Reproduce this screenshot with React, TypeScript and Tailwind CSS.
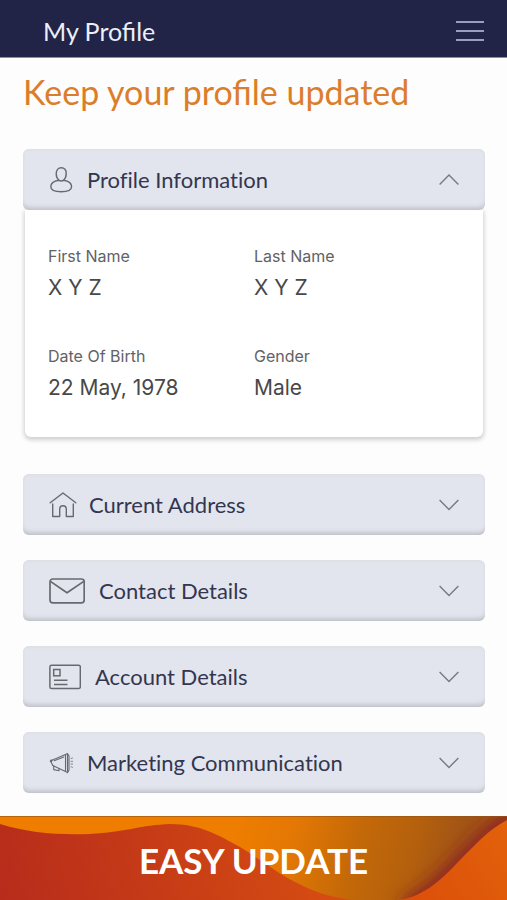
import React, { useState } from 'react';

interface Field {
  label: string;
  value: string;
}

interface Section {
  id: string;
  title: string;
  icon: React.ReactNode;
  gap: string;
  fields: Field[];
}

const UserIcon = () => (
  <svg className="w-6 h-7" viewBox="0 0 24 28" fill="none" stroke="currentColor" strokeWidth={1.4}>
    <path d="M9.8 14.2C8 12.8 7.2 10.4 7.2 7.6 7.2 4 9.2 1.8 12.2 1.8S17.2 4 17.2 7.6c0 2.800-.8 5.200-2.600 6.600" />
    <path d="M9.8 14.2C5 15 1.8 17.4 1.8 20.6 1.8 24 6.4 25.8 12.2 25.8s10.400-1.800 10.400-5.200c0-3.200-3.200-5.600-8-6.400-1.500 1-3.300 1-4.800 0z" />
  </svg>
);

const HomeIcon = () => (
  <svg className="w-7 h-7" viewBox="0 0 28 28" fill="none" stroke="currentColor" strokeWidth={1.4} strokeLinejoin="round" strokeLinecap="round">
    <path d="M1.2 11.8 14 2l12.8 9.8" />
    <path d="M3.7 13v12.500h7v-7.300c0-4.600 6.600-4.600 6.600 0v7.300h7V13" />
  </svg>
);

const MailIcon = () => (
  <svg className="w-9 h-7" viewBox="0 0 36 28" fill="none" stroke="currentColor" strokeWidth={1.7} strokeLinejoin="round">
    <rect x="1" y="2" width="34.2" height="23.8" rx="2.8" />
    <path d="M1.4 4.4 18 15.8 34.8 4.4" />
  </svg>
);

const CardIcon = () => (
  <svg className="w-8 h-7" viewBox="0 0 32 28" fill="none" stroke="currentColor" strokeWidth={1.5}>
    <rect x="0.9" y="2.3" width="30.4" height="23.2" rx="1.6" />
    <rect x="4.7" y="6.5" width="6.3" height="6.3" />
    <path d="M5 17.300h13.500M5 21.600h13.500" />
  </svg>
);

const MegaphoneIcon = () => (
  <svg className="w-6 h-7" viewBox="0 0 24 28" fill="none" stroke="currentColor" strokeWidth={1.1} strokeLinejoin="round" strokeLinecap="round">
    <path d="M3 11.2 16.500 5.600v16.800L3.800 16.4" />
    <path d="M3 11.2C1.2 10.8.8 12.8 2.2 13.3M3.8 16.4 2.2 13.3 3 11.200" />
    <path d="M5.2 11.8 14.8 8M4.7 17v3.600l5.300 1.200v-2.300" />
    <path d="M16.5 5.6 18.500 4.500v19.200l-2-1.300M18.500 4.500 20 7v14l-1.500 2.700" />
    <path d="M18.500 10.500v7" />
    <path d="M22 9.500l1.500-.5M22 12.300h1.600M22 15h1.600M22 17.800l1.500.5" strokeWidth={0.8} />
  </svg>
);

const Chevron = ({ open }: { open: boolean }) => (
  <svg className="w-5 h-3 text-[#777a82]" viewBox="0 0 20 12" fill="none" stroke="currentColor" strokeWidth={1.4}>
    <path d={open ? 'M.6 10.500 10 1l9.400 9.500' : 'M.6 1 10 10.500 19.400 1'} />
  </svg>
);

const sections: Section[] = [
  {
    id: 'profile',
    title: 'Profile Information',
    icon: <UserIcon />,
    gap: 'gap-[14px]',
    fields: [
      { label: 'First Name', value: 'X Y Z' },
      { label: 'Last Name', value: 'X Y Z' },
      { label: 'Date Of Birth', value: '22 May, 1978' },
      { label: 'Gender', value: 'Male' },
    ],
  },
  { id: 'address', title: 'Current Address', icon: <HomeIcon />, gap: 'gap-3', fields: [] },
  { id: 'contact', title: 'Contact Details', icon: <MailIcon />, gap: 'gap-[14px]', fields: [] },
  { id: 'account', title: 'Account Details', icon: <CardIcon />, gap: 'gap-[14px]', fields: [] },
  { id: 'marketing', title: 'Marketing Communication', icon: <MegaphoneIcon />, gap: 'gap-[14px]', fields: [] },
];

const AccordionItem = ({ section, open, onToggle }: { section: Section; open: boolean; onToggle: () => void }) => (
  <section className={open ? 'mb-3' : ''}>
    <h2>
      <button
        type="button"
        aria-expanded={open}
        onClick={onToggle}
        className="flex w-full h-[61px] items-center justify-between rounded-md bg-[#e2e5ed] px-[26px] shadow-[inset_0_-5px_5px_-3px_#b9bbc3,inset_0_2px_3px_-1px_#dcdde2]"
      >
        <span className={`flex items-center text-[#666a70] ${section.gap}`}>
          {section.icon}
          <span className="font-['Lato',sans-serif] text-[22px] leading-7 text-[#343650] [font-variant-ligatures:none]">{section.title}</span>
        </span>
        <Chevron open={open} />
      </button>
    </h2>
    {open && section.fields.length > 0 && (
      <dl className="mx-[2px] grid grid-cols-2 gap-y-[42px] rounded-b-md bg-white px-[23px] pt-9 pb-[33px] shadow-[0_2px_4px_1px_#cfcfd1] font-['Inter',sans-serif]">
        {section.fields.map((field) => (
          <div key={field.label}>
            <dt className="text-[16px] leading-5 text-[#626265]">{field.label}</dt>
            <dd className="mt-[6px] text-[21px] leading-8 text-[#48484a]">{field.value}</dd>
          </div>
        ))}
      </dl>
    )}
  </section>
);

export default function App() {
  const [openId, setOpenId] = useState('profile');

  return (
    <div className="flex min-h-screen flex-col bg-[#fdfdfd] font-['Lato',sans-serif]">
      <header className="flex h-[58px] items-center justify-between border-b border-[#8e8fa5] bg-[#212447] pl-[43px] pr-[23px] pt-1">
        <p className="text-[25px] leading-8 text-[#eceef8]">My Profile</p>
        <button type="button" aria-label="Menu" className="flex flex-col gap-[7px] w-7">
          <span className="h-[2px] w-full bg-[#9c9dbd]" />
          <span className="h-[2px] w-full bg-[#9c9dbd]" />
          <span className="h-[2px] w-full bg-[#9c9dbd]" />
        </button>
      </header>

      <main className="flex-1 pl-[23px] pr-[22px] pb-[23px]">
        <h1 className="pt-3 text-[34px] leading-11 text-[#dc7d2c]">Keep your profile updated</h1>
        <div className="mt-[35px] flex flex-col gap-[25px]">
          {sections.map((section) => (
            <AccordionItem
              key={section.id}
              section={section}
              open={openId === section.id}
              onToggle={() => setOpenId(openId === section.id ? '' : section.id)}
            />
          ))}
        </div>
      </main>

      <button
        type="button"
        className="relative h-[84px] w-full overflow-hidden pt-1 text-[35px] leading-10 font-bold text-white"
      >
        <svg className="absolute inset-0 h-full w-full" viewBox="0 0 507 84" preserveAspectRatio="none" aria-hidden="true">
          <defs>
            <linearGradient id="back" gradientUnits="userSpaceOnUse" x1="240" y1="0" x2="450" y2="60">
              <stop offset="0" stopColor="#ee7d00" />
              <stop offset="0.25" stopColor="#e47804" />
              <stop offset="0.55" stopColor="#c46908" />
              <stop offset="0.8" stopColor="#b4600d" />
              <stop offset="1" stopColor="#a25416" />
            </linearGradient>
            <linearGradient id="left" gradientUnits="userSpaceOnUse" x1="0" y1="84" x2="310" y2="20">
              <stop offset="0" stopColor="#b72c1b" />
              <stop offset="1" stopColor="#d54b12" />
            </linearGradient>
            <linearGradient id="right" gradientUnits="userSpaceOnUse" x1="400" y1="84" x2="507" y2="10">
              <stop offset="0" stopColor="#dc4e0a" />
              <stop offset="1" stopColor="#e2610a" />
            </linearGradient>
            <filter id="soft" x="-50%" y="-50%" width="200%" height="200%">
              <feGaussianBlur stdDeviation="8" />
            </filter>
          </defs>
          <rect width="507" height="84" fill="url(#back)" />
          <path d="M405 92C428 82 445 64 463 46C479 30 492 14 515 2" fill="none" stroke="#8c2420" strokeWidth="18" filter="url(#soft)" />
          <path d="M0 8C30 17 55 19 90 18C125 16 142 9 170 8C200 8 218 19 240 31C270 49 300 78 352 84H0z" fill="url(#left)" />
          <path d="M400 84C425 80 443 62 460 44C476 28 488 14 507 4V84z" fill="url(#right)" />
          <path d="M0 .5H507" stroke="#935317" strokeOpacity=".6" />
        </svg>
        <span className="relative">EASY UPDATE</span>
      </button>
    </div>
  );
}
